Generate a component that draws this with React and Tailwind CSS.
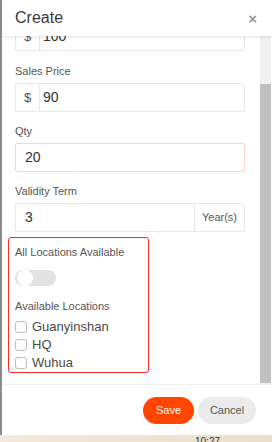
import { useState } from "react";

const font = { fontFamily: '"Liberation Sans", Arial, sans-serif' };

function Field({ label, children, className = "" }) {
  return (
    <div className={`flex flex-col ${className}`}>
      <span className="h-[15px] text-[11px] leading-[15px] text-[#555]">{label}</span>
      <div className="mt-[4px]">{children}</div>
    </div>
  );
}

function Checkbox({ label }) {
  return (
    <label className="flex h-[18px] items-center gap-[5px]">
      <span className="h-[12px] w-[12px] rounded-[3px] border border-[#bdbdbd] bg-white" />
      <span className="text-[13px] text-[#4a4a4a]">{label}</span>
    </label>
  );
}

export default function App() {
  const [allLocations] = useState(false);

  return (
    <div style={font} className="flex h-[442px] w-[272px] flex-col overflow-hidden bg-white">
      <div className="flex h-[435px] border-l-2 border-[#8c8c8c]">
        <div className="flex flex-1 flex-col">
          <div className="relative z-10 flex h-[36px] shrink-0 items-center justify-between bg-white pl-[13px] pr-[15px] shadow-[0_1px_3px_rgba(0,0,0,0.12)]">
            <h1 className="text-[16px] text-[#3a3a3a]">Create</h1>
            <span className="text-[15px] font-bold leading-none text-[#999]">×</span>
          </div>

          <div className="flex h-[348px] shrink-0">
            <div className="flex-1 overflow-hidden pl-[13px] pr-[15px]">
              <div className="-mt-[14px] flex h-[29px] rounded-[2px] border border-[#e8e8e8]">
                <span className="flex w-[24px] items-center justify-center border-r border-[#e8e8e8] text-[13px] text-[#555]">$</span>
                <span className="flex items-center pl-[3px] text-[14px] text-[#333]">100</span>
              </div>

              <Field label="Sales Price" className="mt-[13px]">
                <div className="flex h-[29px] rounded-[2px] border border-[#e8e8e8]">
                  <span className="flex w-[24px] items-center justify-center border-r border-[#e8e8e8] text-[13px] text-[#555]">$</span>
                  <span className="flex items-center pl-[3px] text-[14px] text-[#333]">90</span>
                </div>
              </Field>

              <Field label="Qty" className="mt-[12px]">
                <div className="flex h-[29px] items-center rounded-[2px] border border-[#fcd3c6] pl-[9px] text-[14px] text-[#333]">20</div>
              </Field>

              <Field label="Validity Term" className="mt-[12px]">
                <div className="flex h-[29px] rounded-[2px] border border-[#e8e8e8]">
                  <span className="flex flex-1 items-center pl-[9px] text-[14px] text-[#333]">3</span>
                  <span className="flex w-[50px] items-center justify-center border-l border-[#e8e8e8] text-[11px] text-[#555]">Year(s)</span>
                </div>
              </Field>

              <div className="-ml-[7px] mt-[5px] flex h-[136px] w-[141px] flex-col rounded-[3px] border-[1.5px] border-[#ff2b2b] pl-[6px] pt-[7px]">
                <span className="text-[11px] leading-[15px] text-[#555]">All Locations Available</span>
                <div className={`mt-[10px] flex h-[20px] w-[41px] items-center rounded-full px-[2px] ${allLocations ? "bg-[#ff4500]" : "bg-[#e2e2e2]"}`}>
                  <span className="h-[16px] w-[16px] rounded-full bg-white" />
                </div>
                <span className="mt-[13px] text-[11px] leading-[15px] text-[#555]">Available Locations</span>
                <div className="mt-[4px] flex flex-col">
                  <Checkbox label="Guanyinshan" />
                  <Checkbox label="HQ" />
                  <Checkbox label="Wuhua" />
                </div>
              </div>
            </div>

            <div className="flex w-[11px] flex-col bg-[#f1f1f1]">
              <div className="mt-[48px] h-[299px] bg-[#c1c1c1]" />
            </div>
            <div className="w-[1px]" />
          </div>

          <div className="flex flex-1 items-center justify-end gap-[4px] border-t border-[#f0f0f0] pr-[16px]">
            <button className="h-[27px] w-[51px] rounded-full bg-[#ff4500] text-[11px] font-medium text-white">Save</button>
            <button className="h-[27px] w-[58px] rounded-full bg-[#ebebeb] text-[11px] text-[#555]">Cancel</button>
          </div>
        </div>
      </div>

      <div className="relative h-[7px] overflow-hidden bg-gradient-to-r from-[#f1e9dd] to-[#eadfcc]">
        <span className="absolute left-[195px] top-[2px] text-[10px] leading-none text-[#333]">10:27</span>
      </div>
    </div>
  );
}
